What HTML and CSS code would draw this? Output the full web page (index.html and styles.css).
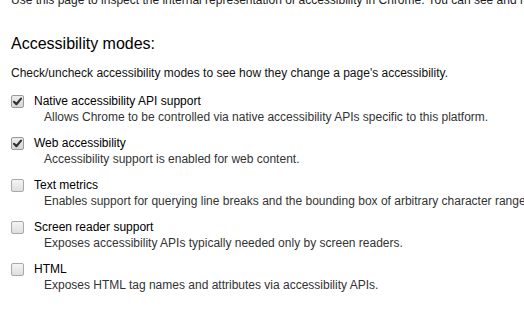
FILE: index.html
```html
<!DOCTYPE html>
<html>
<head>
<meta charset="utf-8">
<link rel="stylesheet" href="styles.css">
</head>
<body>
<div class="page">
  <p class="lead">Use this page to inspect the internal representation of accessibility in Chrome. You can see and modify the accessibility modes below.</p>
  <h2 class="title">Accessibility modes:</h2>
  <p class="intro">Check/uncheck accessibility modes to see how they change a page's accessibility.</p>
  <ul class="modes">
    <li class="mode">
      <div class="mode-row"><span class="box checked"><svg viewBox="0 0 13 13" width="13" height="13"><path d="M3 6.8 L5.4 9.2 L10 3.6" fill="none" stroke="#333" stroke-width="2.2" stroke-linecap="round" stroke-linejoin="round"/></svg></span><span class="label">Native accessibility API support</span></div>
      <div class="desc">Allows Chrome to be controlled via native accessibility APIs specific to this platform.</div>
    </li>
    <li class="mode">
      <div class="mode-row"><span class="box checked"><svg viewBox="0 0 13 13" width="13" height="13"><path d="M3 6.8 L5.4 9.2 L10 3.6" fill="none" stroke="#333" stroke-width="2.2" stroke-linecap="round" stroke-linejoin="round"/></svg></span><span class="label">Web accessibility</span></div>
      <div class="desc">Accessibility support is enabled for web content.</div>
    </li>
    <li class="mode">
      <div class="mode-row"><span class="box"></span><span class="label">Text metrics</span></div>
      <div class="desc">Enables support for querying line breaks and the bounding box of arbitrary character ranges.</div>
    </li>
    <li class="mode">
      <div class="mode-row"><span class="box"></span><span class="label">Screen reader support</span></div>
      <div class="desc">Exposes accessibility APIs typically needed only by screen readers.</div>
    </li>
    <li class="mode">
      <div class="mode-row"><span class="box"></span><span class="label">HTML</span></div>
      <div class="desc">Exposes HTML tag names and attributes via accessibility APIs.</div>
    </li>
  </ul>
</div>
</body>
</html>
```
FILE: styles.css
```css
html, body {
  margin: 0;
  padding: 0;
  background: #fff;
}
body {
  font-family: "Liberation Sans", Arial, sans-serif;
  font-size: 12px;
  color: #000;
  overflow: hidden;
}
.page {
  padding: 0 11px;
  margin-top: -9px;
}
.lead {
  margin: 0;
  line-height: 18px;
  white-space: nowrap;
  color: #222;
}
.title {
  margin: 25px 0 0 0;
  font-size: 16px;
  font-weight: normal;
  line-height: 20px;
  color: #000;
}
.intro {
  margin: 12px 0 0 0;
  line-height: 14px;
  color: #111;
}
.modes {
  list-style: none;
  margin: 14px 0 0 0;
  padding: 0;
}
.mode {
  margin-bottom: 12px;
}
.mode-row {
  display: flex;
  align-items: center;
  gap: 10px;
  height: 14px;
}
.box {
  box-sizing: border-box;
  width: 13px;
  height: 13px;
  border: 1px solid #a9a9a9;
  border-radius: 2px;
  background: linear-gradient(#f4f4f4, #dedede);
  display: flex;
  align-items: center;
  justify-content: center;
  flex: none;
}
.box svg {
  display: block;
  margin: -1px;
}
.box.checked {
  background: linear-gradient(#ececec, #d6d6d6);
  border-color: #9a9a9a;
}
.label {
  line-height: 14px;
  color: #000;
}
.desc {
  margin-left: 33px;
  margin-top: 2px;
  line-height: 14px;
  color: #333;
  white-space: nowrap;
}
```
